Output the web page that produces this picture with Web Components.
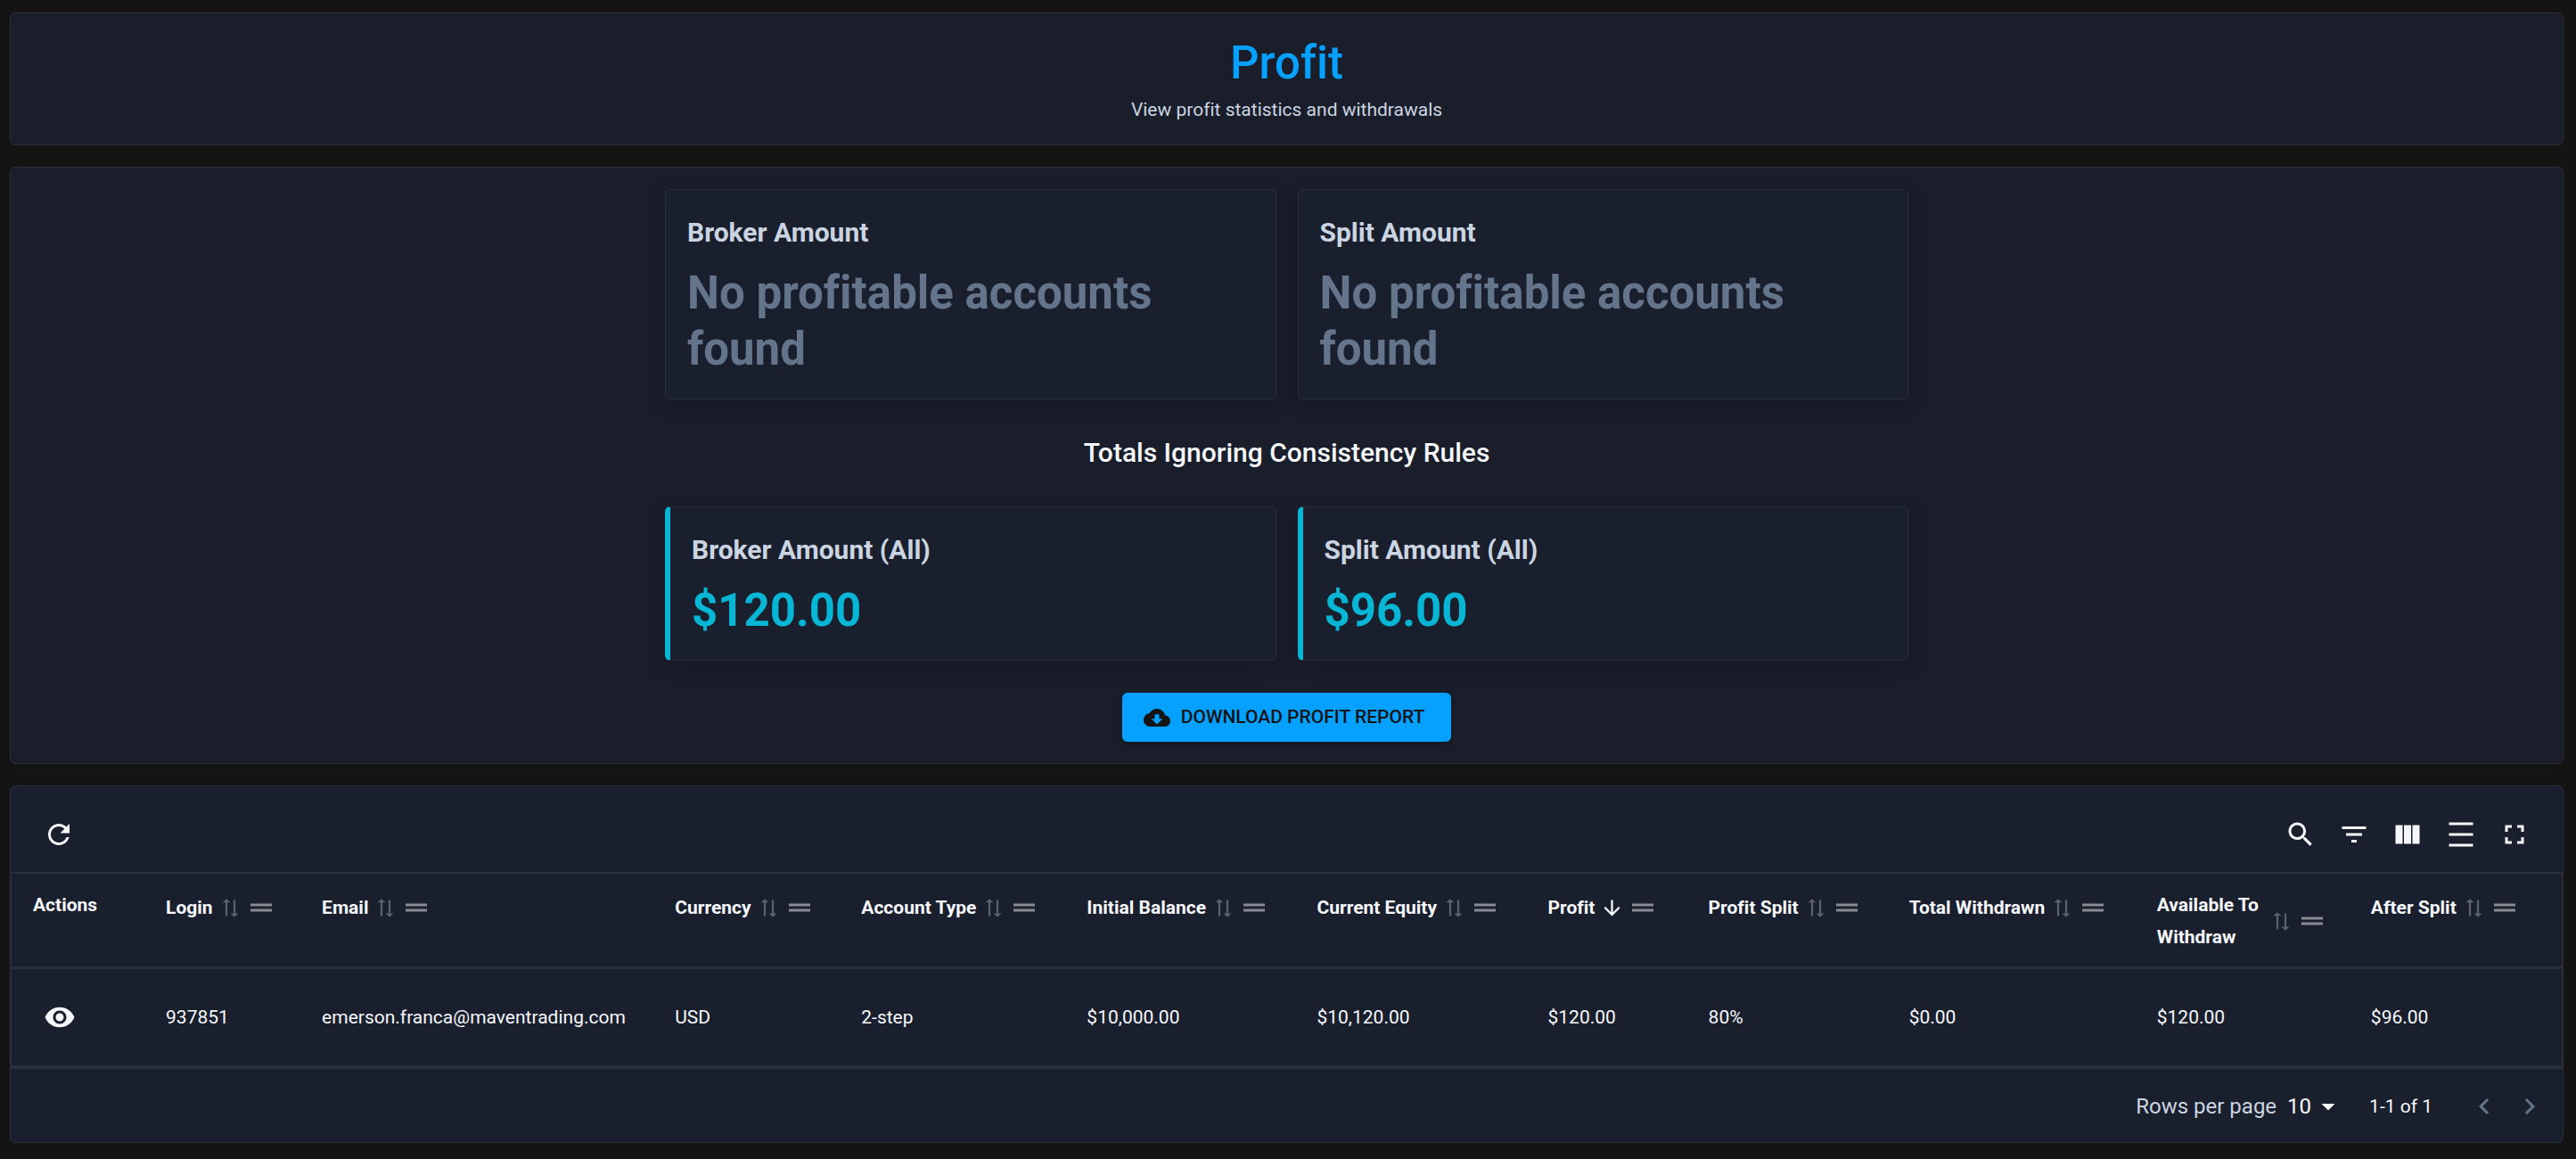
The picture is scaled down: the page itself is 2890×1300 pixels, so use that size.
<!DOCTYPE html>
<html lang="en">
<head>
    <meta charset="UTF-8">
    <meta name="viewport" content="width=device-width, initial-scale=1.0">
    <title>Profit</title>
    <style>
        :root {
            --panel: #1a1e2a;
            --card: #1a1f2d;
            --line: #2b2e3b;
            --text: #f5f7fb;
            --text-soft: #cbd5e1;
            --muted: #64748b;
            --blue: #06a0ff;
            --cyan: #06b6d4;
        }
        body {
            margin: 0;
            padding: 14px 14px 16px 11px;
            background: #141414;
            color: var(--text);
            font-family: Roboto, "Liberation Sans", sans-serif;
            font-size: 21px;
            font-variant-ligatures: none;
            line-height: 30px;
        }
        main {
            display: flex;
            flex-direction: column;
            gap: 24px;
        }
    </style>
</head>
<body>
    <main>
        <app-panel>
            <page-heading title-text="Profit">View profit statistics and withdrawals</page-heading>
        </app-panel>
        <app-panel>
            <profit-summary>
                <stat-card label="Broker Amount" empty>No profitable accounts found</stat-card>
                <stat-card label="Split Amount" empty>No profitable accounts found</stat-card>
                <stat-card slot="all" label="Broker Amount (All)" accent>$120.00</stat-card>
                <stat-card slot="all" label="Split Amount (All)" accent>$96.00</stat-card>
                <download-button slot="action">DOWNLOAD PROFIT REPORT</download-button>
            </profit-summary>
        </app-panel>
        <app-panel flush>
            <table-toolbar></table-toolbar>
            <profit-table></profit-table>
            <table-pager></table-pager>
        </app-panel>
    </main>

    <script>
        const ICONS = {
            refresh: 'M17.65 6.35C16.2 4.9 14.21 4 12 4c-4.42 0-7.99 3.58-7.99 8s3.57 8 7.99 8c3.73 0 6.84-2.55 7.73-6h-2.08c-.82 2.33-3.04 4-5.65 4-3.31 0-6-2.69-6-6s2.69-6 6-6c1.66 0 3.14.69 4.22 1.78L13 11h7V4l-2.35 2.35z',
            search: 'M15.5 14h-.79l-.28-.27C15.41 12.59 16 11.11 16 9.5 16 5.91 13.09 3 9.5 3S3 5.91 3 9.5 5.91 16 9.5 16c1.61 0 3.09-.59 4.23-1.57l.27.28v.79l5 4.99L20.49 19l-4.99-5zm-6 0C7.01 14 5 11.99 5 9.5S7.01 5 9.5 5 14 7.01 14 9.5 11.99 14 9.5 14z',
            filter: 'M10 18h4v-2h-4v2zM3 6v2h18V6H3zm3 7h12v-2H6v2z',
            columns: 'M14.67 5v14H9.33V5h5.34zm1 14H21V5h-5.33v14zm-7.34 0V5H3v14h5.33z',
            density: 'M3 3h18v2H3V3zm0 16h18v2H3v-2zm0-8h18v2H3v-2z',
            fullscreen: 'M7 14H5v5h5v-2H7v-3zm-2-4h2V7h3V5H5v5zm12 7h-3v2h5v-5h-2v3zM14 5v2h3v3h2V5h-5z',
            cloud: 'M19.35 10.04C18.67 6.59 15.64 4 12 4 9.11 4 6.6 5.64 5.35 8.04 2.34 8.36 0 10.91 0 14c0 3.31 2.69 6 6 6h13c2.76 0 5-2.24 5-5 0-2.64-2.05-4.78-4.65-4.96zM17 13l-5 5-5-5h3V9h4v4h3z',
            eye: 'M12 4.5C7 4.5 2.73 7.61 1 12c1.73 4.39 6 7.5 11 7.5s9.27-3.11 11-7.5c-1.73-4.39-6-7.5-11-7.5zM12 17c-2.76 0-5-2.24-5-5s2.24-5 5-5 5 2.24 5 5-2.24 5-5 5zm0-8c-1.66 0-3 1.34-3 3s1.34 3 3 3 3-1.34 3-3-1.34-3-3-3z',
            down: 'M20 12l-1.41-1.41L13 16.17V4h-2v12.17l-5.58-5.59L4 12l8 8 8-8z',
            drag: 'M20 9H4v2h16V9zM4 15h16v-2H4v2z',
            sort: 'M8 2.9L4 6.5h3V20h2V6.5h3L8 2.9zM16 21l4-3.6h-3V4h-2v13.4h-3l4 3.6z',
            caret: 'M7 10l5 5 5-5H7z',
            prev: 'M15.41 7.41L14 6l-6 6 6 6 1.41-1.41L10.83 12l4.58-4.59z',
            next: 'M10 6L8.59 7.41 13.17 12l-4.58 4.59L10 18l6-6-6-6z'
        };

        class SvgIcon extends HTMLElement {
            constructor() {
                super();
                this.attachShadow({ mode: 'open' });
            }

            connectedCallback() {
                this.shadowRoot.innerHTML = `
                    <style>
                        :host {
                            display: block;
                            flex: none;
                            width: 36px;
                            height: 36px;
                        }
                        svg {
                            display: block;
                            width: 100%;
                            height: 100%;
                            fill: currentColor;
                        }
                    </style>
                    <svg viewBox="0 0 24 24" aria-hidden="true"><path d="${ICONS[this.getAttribute('name')]}"/></svg>
                `;
            }
        }

        class AppPanel extends HTMLElement {
            constructor() {
                super();
                this.attachShadow({ mode: 'open' });
                this.shadowRoot.innerHTML = `
                    <style>
                        :host {
                            display: block;
                            padding: 24px;
                            background: var(--panel);
                            border: 1px solid var(--line);
                            border-radius: 6px;
                        }
                        :host([flush]) {
                            padding: 0;
                            background: var(--card);
                        }
                    </style>
                    <slot></slot>
                `;
            }
        }

        class PageHeading extends HTMLElement {
            constructor() {
                super();
                this.attachShadow({ mode: 'open' });
                this.shadowRoot.innerHTML = `
                    <style>
                        :host {
                            display: block;
                            text-align: center;
                        }
                        h1 {
                            margin: 0 0 6px;
                            color: var(--blue);
                            font-size: 51px;
                            font-weight: 500;
                            line-height: 63px;
                        }
                        p {
                            margin: 0;
                            color: var(--text-soft);
                        }
                    </style>
                    <h1></h1>
                    <p><slot></slot></p>
                `;
            }

            connectedCallback() {
                this.shadowRoot.querySelector('h1').textContent = this.getAttribute('title-text');
            }
        }

        class ProfitSummary extends HTMLElement {
            constructor() {
                super();
                this.attachShadow({ mode: 'open' });
                this.shadowRoot.innerHTML = `
                    <style>
                        :host {
                            display: flex;
                            flex-direction: column;
                            align-items: center;
                            gap: 36px;
                        }
                        .cards {
                            display: grid;
                            grid-template-columns: 1fr 1fr;
                            gap: 24px;
                            width: 100%;
                            max-width: 1395px;
                        }
                        h2 {
                            margin: 0;
                            font-size: 30px;
                            font-weight: 500;
                            line-height: 48px;
                        }
                    </style>
                    <div class="cards"><slot></slot></div>
                    <h2>Totals Ignoring Consistency Rules</h2>
                    <div class="cards"><slot name="all"></slot></div>
                    <slot name="action"></slot>
                `;
            }
        }

        class StatCard extends HTMLElement {
            constructor() {
                super();
                this.attachShadow({ mode: 'open' });
                this.shadowRoot.innerHTML = `
                    <style>
                        :host {
                            display: block;
                            padding: 24px;
                            background: var(--card);
                            border: 1px solid var(--line);
                            border-radius: 6px;
                            box-shadow: 0 6px 18px rgba(20, 14, 30, 0.35);
                        }
                        :host([accent]) {
                            border-left: 6px solid var(--cyan);
                        }
                        h3 {
                            margin: 0 0 12px;
                            color: var(--text-soft);
                            font-size: 30px;
                            font-weight: 700;
                            line-height: 48px;
                        }
                        p {
                            margin: 0;
                            color: var(--cyan);
                            font-size: 51px;
                            font-weight: 700;
                            line-height: 63px;
                        }
                        :host([empty]) p {
                            color: var(--muted);
                        }
                    </style>
                    <h3></h3>
                    <p><slot></slot></p>
                `;
            }

            connectedCallback() {
                this.shadowRoot.querySelector('h3').textContent = this.getAttribute('label');
            }
        }

        class DownloadButton extends HTMLElement {
            constructor() {
                super();
                this.attachShadow({ mode: 'open' });
                this.shadowRoot.innerHTML = `
                    <style>
                        :host {
                            display: block;
                        }
                        button {
                            display: flex;
                            align-items: center;
                            gap: 12px;
                            padding: 9px 30px 9px 24px;
                            border: 0;
                            border-radius: 6px;
                            background: var(--blue);
                            color: #141414;
                            font: 500 21px/37px Roboto, "Liberation Sans", sans-serif;
                            box-shadow: 0 3px 6px rgba(0, 0, 0, 0.25);
                            cursor: pointer;
                        }
                        svg-icon {
                            width: 30px;
                            height: 30px;
                        }
                    </style>
                    <button type="button"><svg-icon name="cloud"></svg-icon><slot></slot></button>
                `;
            }
        }

        class TableToolbar extends HTMLElement {
            constructor() {
                super();
                this.attachShadow({ mode: 'open' });
                this.shadowRoot.innerHTML = `
                    <style>
                        :host {
                            display: flex;
                            align-items: center;
                            justify-content: space-between;
                            padding: 24px 24px 12px;
                        }
                        div {
                            display: flex;
                        }
                        button {
                            padding: 12px;
                            border: 0;
                            background: none;
                            color: var(--text);
                            cursor: pointer;
                        }
                    </style>
                    <button type="button" aria-label="Refresh"><svg-icon name="refresh"></svg-icon></button>
                    <div>
                        <button type="button" aria-label="Show/Hide search"><svg-icon name="search"></svg-icon></button>
                        <button type="button" aria-label="Show/Hide filters"><svg-icon name="filter"></svg-icon></button>
                        <button type="button" aria-label="Show/Hide columns"><svg-icon name="columns"></svg-icon></button>
                        <button type="button" aria-label="Toggle density"><svg-icon name="density"></svg-icon></button>
                        <button type="button" aria-label="Toggle full screen"><svg-icon name="fullscreen"></svg-icon></button>
                    </div>
                `;
            }
        }

        const COLUMNS = [
            { name: 'Login', width: 175 },
            { name: 'Email', width: 396 },
            { name: 'Currency', width: 209 },
            { name: 'Account Type', width: 253 },
            { name: 'Initial Balance', width: 258 },
            { name: 'Current Equity', width: 259 },
            { name: 'Profit', width: 180, sorted: true },
            { name: 'Profit Split', width: 225 },
            { name: 'Total Withdrawn', width: 278 },
            { name: 'Available To Withdraw', width: 240 },
            { name: 'After Split', width: 238 }
        ];

        const ROWS = [
            ['937851', 'emerson.franca@maventrading.com', 'USD', '2-step', '$10,000.00', '$10,120.00', '$120.00', '80%', '$0.00', '$120.00', '$96.00']
        ];

        class ProfitTable extends HTMLElement {
            constructor() {
                super();
                this.attachShadow({ mode: 'open' });
                this.shadowRoot.innerHTML = `
                    <style>
                        :host {
                            display: block;
                        }
                        table {
                            width: 100%;
                            table-layout: fixed;
                            border: 1px solid var(--line);
                            border-width: 2px 1px 0;
                            border-spacing: 0;
                        }
                        th {
                            padding: 17px 24px 15px;
                            border-bottom: 3px solid var(--line);
                            font-weight: 700;
                            line-height: 36px;
                            text-align: left;
                            vertical-align: top;
                        }
                        td {
                            padding: 24px;
                            border-bottom: 4px solid var(--line);
                        }
                        .head {
                            display: flex;
                            align-items: center;
                            min-height: 42px;
                        }
                        button {
                            display: block;
                            padding: 0;
                            border: 0;
                            background: none;
                            color: var(--text);
                            cursor: pointer;
                        }
                        .sort {
                            margin: 0 3px 0 6px;
                        }
                        .sort svg-icon {
                            width: 27px;
                            height: 27px;
                        }
                        .sort.idle {
                            opacity: 0.3;
                        }
                        .drag {
                            opacity: 0.5;
                        }
                        .view {
                            padding: 12px;
                        }
                    </style>
                    <table>
                        <colgroup>
                            <col style="width: 149px">
                            ${COLUMNS.map(c => `<col style="width: ${c.width}px">`).join('')}
                        </colgroup>
                        <thead>
                            <tr>
                                <th>Actions</th>
                                ${COLUMNS.map(c => `
                                    <th>
                                        <div class="head">
                                            <span>${c.name}</span>
                                            <button type="button" class="sort ${c.sorted ? '' : 'idle'}" aria-label="Sort by ${c.name}"><svg-icon name="${c.sorted ? 'down' : 'sort'}"></svg-icon></button>
                                            <button type="button" class="drag" aria-label="Move"><svg-icon name="drag"></svg-icon></button>
                                        </div>
                                    </th>
                                `).join('')}
                            </tr>
                        </thead>
                        <tbody>
                            ${ROWS.map(row => `
                                <tr>
                                    <td><button type="button" class="view" aria-label="View"><svg-icon name="eye"></svg-icon></button></td>
                                    ${row.map(cell => `<td>${cell}</td>`).join('')}
                                </tr>
                            `).join('')}
                        </tbody>
                    </table>
                `;
            }
        }

        class TablePager extends HTMLElement {
            constructor() {
                super();
                this.attachShadow({ mode: 'open' });
                this.shadowRoot.innerHTML = `
                    <style>
                        :host {
                            display: flex;
                            align-items: center;
                            justify-content: flex-end;
                            padding: 18px 12px 16px;
                        }
                        label {
                            margin-right: 12px;
                            color: var(--text-soft);
                            font-size: 24px;
                        }
                        .select {
                            display: grid;
                            align-items: center;
                            margin-right: 28px;
                        }
                        .select > * {
                            grid-area: 1 / 1;
                        }
                        select {
                            width: 64px;
                            padding: 0;
                            border: 0;
                            appearance: none;
                            background: none;
                            color: var(--text);
                            font: 24px/30px Roboto, "Liberation Sans", sans-serif;
                        }
                        svg-icon {
                            justify-self: end;
                            pointer-events: none;
                        }
                        .range {
                            margin-right: 32px;
                        }
                        button {
                            padding: 6px;
                            width: 51px;
                            display: grid;
                            place-items: center;
                            border: 0;
                            background: none;
                            color: var(--muted);
                        }
                        button svg-icon {
                            justify-self: center;
                        }
                    </style>
                    <label for="rows">Rows per page</label>
                    <div class="select">
                        <select id="rows"><option>10</option></select>
                        <svg-icon name="caret"></svg-icon>
                    </div>
                    <span class="range">1-1 of 1</span>
                    <button type="button" aria-label="Go to previous page" disabled><svg-icon name="prev"></svg-icon></button>
                    <button type="button" aria-label="Go to next page" disabled><svg-icon name="next"></svg-icon></button>
                `;
            }
        }

        customElements.define('svg-icon', SvgIcon);
        customElements.define('app-panel', AppPanel);
        customElements.define('page-heading', PageHeading);
        customElements.define('profit-summary', ProfitSummary);
        customElements.define('stat-card', StatCard);
        customElements.define('download-button', DownloadButton);
        customElements.define('table-toolbar', TableToolbar);
        customElements.define('profit-table', ProfitTable);
        customElements.define('table-pager', TablePager);
    </script>
</body>
</html>
